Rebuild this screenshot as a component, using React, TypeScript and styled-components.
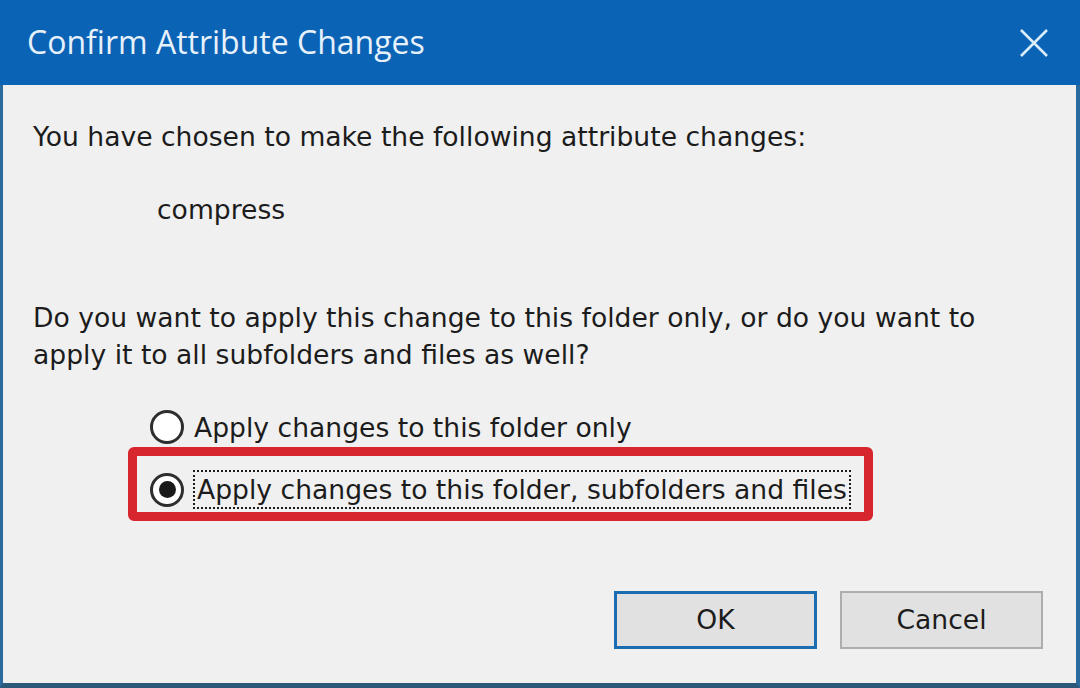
import styled, { createGlobalStyle } from "styled-components"

const GlobalStyle = createGlobalStyle`
    html, body {
        margin: 0;
        padding: 0;
        background: #f0f0f0;
    }
    * {
        box-sizing: border-box;
    }
`

interface RadioProps {
    checked?: boolean
}

const Radio = ({ checked }: RadioProps) => (
    <RadioCircle>{checked && <RadioDot />}</RadioCircle>
)

export default function App() {
    return (
        <>
            <GlobalStyle />
            <Window>
                <TitleBar>
                    <Title>Confirm Attribute Changes</Title>
                    <CloseButton aria-label="Close">
                        <svg width="30" height="30" viewBox="0 0 30 30">
                            <path d="M2 2 L28 28 M28 2 L2 28" stroke="#d8ecfa" strokeWidth="2.6" fill="none" />
                        </svg>
                    </CloseButton>
                </TitleBar>
                <Body>
                    <Text>You have chosen to make the following attribute changes:</Text>
                    <Attribute>compress</Attribute>
                    <Question>
                        Do you want to apply this change to this folder only, or do you want to<br />
                        apply it to all subfolders and files as well?
                    </Question>
                    <RadioGroup>
                        <Option>
                            <Radio />
                            <Label>Apply changes to this folder only</Label>
                        </Option>
                        <Highlight>
                            <Option>
                                <Radio checked />
                                <FocusLabel>Apply changes to this folder, subfolders and files</FocusLabel>
                            </Option>
                        </Highlight>
                    </RadioGroup>
                    <ButtonRow>
                        <Button $primary>OK</Button>
                        <Button>Cancel</Button>
                    </ButtonRow>
                </Body>
            </Window>
        </>
    )
}

const Window = styled.div`
    display: flex;
    flex-direction: column;
    width: 1080px;
    height: 688px;
    background: #f0f0f0;
    border-left: 3px solid #2a6a9c;
    border-right: 4px solid #2a6a9c;
    border-bottom: 5px solid #2b5878;
    font-family: "DejaVu Sans", "Liberation Sans", sans-serif;
    color: #1c1c1c;
`

const TitleBar = styled.div`
    display: flex;
    align-items: center;
    justify-content: space-between;
    height: 85px;
    margin: 0 -4px 0 -3px;
    padding: 0 31px 0 27px;
    background: #0b63b5;
`

const Title = styled.h1`
    margin: 0;
    font-family: "Open Sans", "Noto Sans", sans-serif;
    font-size: 32px;
    font-weight: 400;
    color: #e6f1fb;
    padding-bottom: 2px;
`

const CloseButton = styled.div`
    display: flex;
    width: 30px;
    height: 30px;
`

const Body = styled.div`
    flex: 1;
    display: flex;
    flex-direction: column;
    padding: 33px 33px 34px 30px;
`

const Text = styled.p`
    margin: 0;
    font-size: 26.6px;
    line-height: 37px;
`

const Attribute = styled(Text)`
    margin-top: 36px;
    padding-left: 124px;
`

const Question = styled(Text)`
    margin-top: 71px;
`

const RadioGroup = styled.div`
    display: flex;
    flex-direction: column;
    align-items: flex-start;
    gap: 1px;
    margin-top: 35px;
    margin-left: 95px;

    & > div:first-child {
        height: 38px;
        padding-left: 22px;
    }
`

const Option = styled.div`
    display: flex;
    align-items: center;
    height: 39px;
    font-size: 26.6px;
`

const RadioCircle = styled.span`
    display: flex;
    align-items: center;
    justify-content: center;
    flex-shrink: 0;
    width: 34px;
    height: 34px;
    border-radius: 50%;
    border: 3px solid #2e2e2e;
    background: #ffffff;
    margin-right: 10px;
`

const RadioDot = styled.span`
    width: 17px;
    height: 17px;
    border-radius: 50%;
    background: #1a1a1a;
`

const Label = styled.span`
    line-height: 37px;
`

const FocusLabel = styled.span`
    display: flex;
    align-items: center;
    height: 39px;
    margin-left: -1px;
    padding: 0 2px;
    border: 2px dotted #1c1c1c;
`

const Highlight = styled.div`
    padding: 14px 13px 3px 13px;
    border: 9px solid #d8262f;
    border-radius: 6px;
`

const ButtonRow = styled.div`
    display: flex;
    justify-content: flex-end;
    gap: 23px;
    margin-top: auto;
`

const Button = styled.button<{ $primary?: boolean }>`
    display: flex;
    align-items: center;
    justify-content: center;
    width: 203px;
    height: 58px;
    padding: 0 0 2px;
    background: #e1e1e1;
    border: ${(p) => (p.$primary ? "3px solid #1a6db0" : "2px solid #adadad")};
    font-family: "DejaVu Sans", "Liberation Sans", sans-serif;
    font-size: 26.6px;
    color: #1c1c1c;
`
